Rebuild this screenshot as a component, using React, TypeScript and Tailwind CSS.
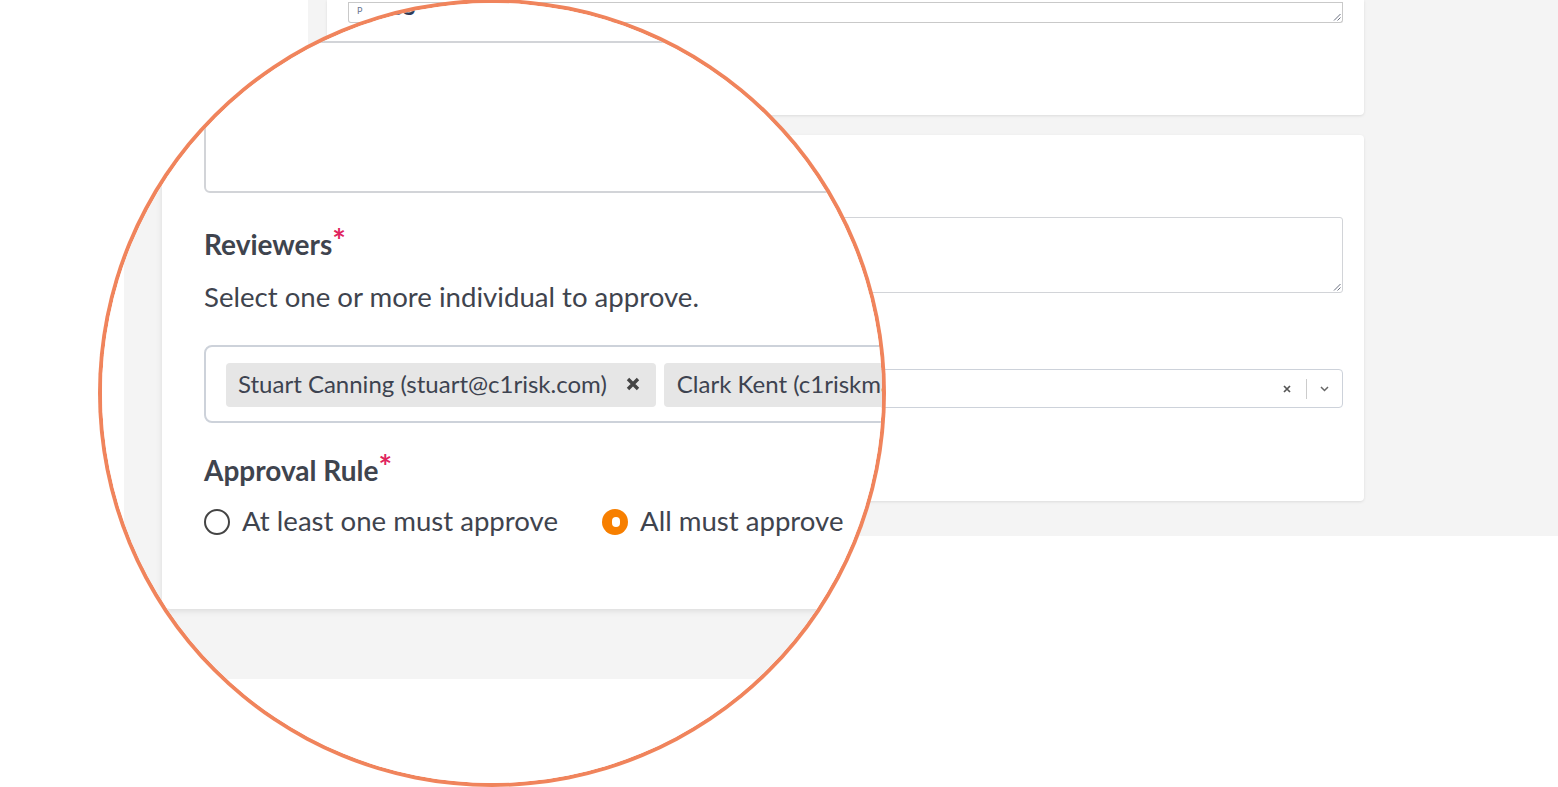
import React from "react";

function Grip() {
  return (
    <svg
      width="8"
      height="8"
      viewBox="0 0 8 8"
      className="absolute bottom-[1px] right-[1px]"
      aria-hidden="true"
    >
      <path d="M7.5 1L1 7.5M7.5 4.5L4.5 7.5" stroke="#6b7080" strokeWidth="1" />
    </svg>
  );
}

function Req() {
  return (
    <span className="relative -top-[1px] text-[16px] font-bold leading-none text-[#e0245e]">
      *
    </span>
  );
}

function Chip({ label, last }: { label: string; last?: boolean }) {
  return (
    <div className="flex h-[22px] shrink-0 items-center rounded-[2px] bg-[#e6e6e6] pl-[6px] pr-[8px] text-[12px] text-[#3d4350]">
      <span className="whitespace-nowrap">{label}</span>
      {!last && (
        <svg width="7" height="7" viewBox="0 0 7 7" className="ml-[10px]" aria-hidden="true">
          <path d="M1 1L6 6M6 1L1 6" stroke="#444" strokeWidth="1.7" />
        </svg>
      )}
    </div>
  );
}

function Page() {
  return (
    <div className="h-[787px] w-[1558px] bg-white font-['Lato',sans-serif] text-[#3f444e]">
      <div className="ml-[308px] flex h-[536px] flex-col gap-[20px] bg-[#f4f4f4] pl-[19px] pr-[194px]">
        {/* top card, cut off by the page top */}
        <div className="h-[115px] rounded-b-[4px] bg-white px-[21px] shadow-[0_1px_3px_rgba(0,0,0,0.1)]">
          <div className="relative h-[21px] rounded-b-[3px] border border-t-0 border-[#c9c9c9]">
            <div className="mt-[2px] border-t border-[#c9c9c9]" />
            <div className="pl-[8px] pt-[2px] text-[9px] leading-[12px] text-[#6a7690]">
              P
            </div>
            <Grip />
          </div>
        </div>

        {/* review card */}
        <div className="flex h-[366px] flex-col rounded-[4px] bg-white px-[21px] pt-[54px] shadow-[0_1px_3px_rgba(0,0,0,0.1)]">
          <div className="h-[20px] text-[14px] font-bold leading-[20px] text-[#2f3a55]">
            Business Process
          </div>
          <div className="relative mt-[8px] h-[76px] rounded-[3px] border border-[#d2d4d8]">
            <Grip />
          </div>

          <div className="mt-[16px] h-[20px] text-[14px] font-bold leading-[20px]">
            Reviewers
            <Req />
          </div>
          <div className="mt-[6px] h-[20px] text-[13.8px] leading-[20px]">
            Select one or more individual to approve.
          </div>

          <div className="mt-[14px] flex h-[39px] items-center rounded-[4px] border-[1.5px] border-[#cdd2da] pl-[10px] pr-[13px]">
            <div className="flex min-w-0 flex-1 gap-[4px] overflow-hidden">
              <Chip label="Stuart Canning (stuart@c1risk.com)" />
              <Chip label="Clark Kent (c1riskmaster@gmail.com)" />
            </div>
            <svg width="8" height="8" viewBox="0 0 8 8" aria-hidden="true">
              <path d="M1 1L7 7M7 1L1 7" stroke="#555" strokeWidth="1.7" />
            </svg>
            <div className="ml-[15px] h-[20px] w-px bg-[#cccccc]" />
            <svg width="9" height="6" viewBox="0 0 9 6" className="ml-[13px]" aria-hidden="true">
              <path d="M1 1L4.5 4.5L8 1" stroke="#666" strokeWidth="1.5" fill="none" />
            </svg>
          </div>

          <div className="mt-[14px] h-[20px] text-[14px] font-bold leading-[20px]">
            Approval Rule
            <Req />
          </div>
          <div className="mt-[5px] flex h-[20px] items-center text-[13.8px] leading-[20px]">
            <span className="h-[13px] w-[13px] rounded-full border-[1.6px] border-[#444]" />
            <span className="ml-[6px]">At least one must approve</span>
            <span className="ml-[22px] flex h-[13px] w-[13px] items-center justify-center rounded-full bg-[#f77f00]">
              <span className="h-[5px] w-[4px] rounded-full bg-white" />
            </span>
            <span className="ml-[6px]">All must approve</span>
          </div>
        </div>
      </div>
    </div>
  );
}

export default function App() {
  return (
    <div className="relative h-[787px] w-[1558px] overflow-hidden bg-white">
      <Page />
      {/* magnifier */}
      <div className="absolute left-[102px] top-[3px] h-[780px] w-[780px] overflow-hidden rounded-full shadow-[0_0_0_4px_#f0845c]">
        <div className="absolute left-[-102px] top-[-3px] origin-[492px_393px] scale-200">
          <Page />
        </div>
      </div>
    </div>
  );
}
